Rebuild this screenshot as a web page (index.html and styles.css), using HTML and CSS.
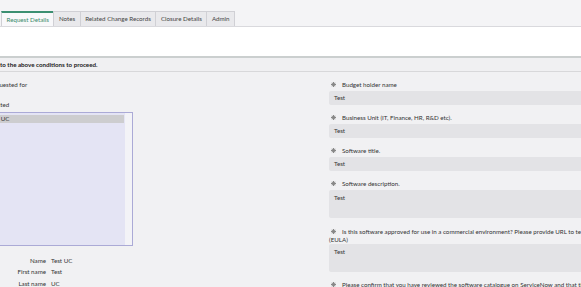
FILE: index.html
```html
<!DOCTYPE html>
<html lang="en">
<head>
    <meta charset="UTF-8">
    <meta name="viewport" content="width=device-width, initial-scale=1.0">
    <title>Software Request</title>
    <link rel="stylesheet" href="styles.css">
</head>
<body>
    <div class="tabbar">
        <div class="tab active">Request Details</div>
        <div class="tab">Notes</div>
        <div class="tab">Related Change Records</div>
        <div class="tab">Closure Details</div>
        <div class="tab">Admin</div>
    </div>
    <div class="banner"></div>
    <div class="notice">to the above conditions to proceed.</div>

    <div class="form">
        <!-- Requested for -->
        <div class="col-left">
            <div class="lbl lbl-req">Requested for</div>
            <div class="lbl lbl-sel">Selected</div>
            <div class="listbox">
                <div class="options">
                    <div class="option selected">Test UC</div>
                </div>
                <div class="scroll-track"></div>
            </div>
            <div class="details">
                <span class="dt">Name</span><span class="dd">Test UC</span>
                <span class="dt">First name</span><span class="dd">Test</span>
                <span class="dt">Last name</span><span class="dd">UC</span>
            </div>
        </div>

        <!-- Variables -->
        <div class="col-right">
            <div class="field">
                <div class="label"><span class="req"></span>Budget holder name</div>
                <div class="input">Test</div>
            </div>
            <div class="field">
                <div class="label"><span class="req"></span>Business Unit (IT, Finance, HR, R&amp;D etc).</div>
                <div class="input">Test</div>
            </div>
            <div class="field">
                <div class="label"><span class="req"></span>Software title.</div>
                <div class="input">Test</div>
            </div>
            <div class="field">
                <div class="label"><span class="req"></span>Software description.</div>
                <div class="input textarea">Test</div>
            </div>
            <div class="field">
                <div class="label label-wrap"><span class="req"></span>Is this software approved for use in a commercial environment? Please provide URL to terms and conditions<br>(EULA)</div>
                <div class="input textarea">Test</div>
            </div>
            <div class="field">
                <div class="label"><span class="req"></span>Please confirm that you have reviewed the software catalogue on ServiceNow and that this software is not already available.</div>
            </div>
        </div>
    </div>
</body>
</html>
```

FILE: styles.css
```css
body {
    margin: 0;
    width: 581px;
    height: 287px;
    overflow: hidden;
    background-color: #f1f1f3;
    color: #333;
    font-family: Lato, "Open Sans", sans-serif;
    font-size: 6.2px;
}
/* Tabs */
.tabbar {
    height: 26px;
    background: #f4f4f6;
    border-bottom: 1px solid #d9d9dd;
    display: flex;
    align-items: flex-end;
    padding-left: 1px;
}
.tab {
    height: 15px;
    box-sizing: border-box;
    line-height: 14px;
    padding: 0 4.5px;
    border: 1px solid #d0d0d5;
    border-bottom: none;
    margin-right: -1px;
    background: #e9e9ec;
    color: #444;
}
.tab.active {
    border-top: 2px solid #3b8f71;
    line-height: 13px;
    background: #f8f8fa;
    color: #3a8a6b;
}
.banner {
    height: 29px;
    background: #fff;
    border-bottom: 2px solid #cbcfcf;
}
.notice {
    height: 13px;
    line-height: 13px;
    background: #f0f0f2;
    border-bottom: 1px solid #d8d8da;
    font-weight: bold;
    color: #222;
}
/* Form */
.form {
    display: grid;
    grid-template-columns: 344px 420px;
    margin-left: -15px;
    padding-top: 8px;
}
.lbl {
    line-height: 9px;
}
.lbl-req {
    padding-left: 4px;
}
.lbl-sel {
    margin-top: 11px;
    padding-left: 1px;
}
.listbox {
    display: flex;
    width: 148px;
    height: 134px;
    box-sizing: border-box;
    margin-top: 3px;
    border: 1px solid #abaad6;
    background: #e4e4f4;
}
.options {
    flex: 1;
    padding: 2px 1px 0 0;
}
.option {
    height: 8px;
    line-height: 8px;
    padding-left: 2px;
}
.option.selected {
    background: #cdcdcf;
}
.scroll-track {
    width: 7px;
    background: #f3f3f7;
}
.details {
    display: grid;
    grid-template-columns: 61px auto;
    column-gap: 5px;
    margin-top: 9px;
    line-height: 11.3px;
}
.dt {
    text-align: right;
}
.field {
    margin-bottom: 8px;
}
.label {
    line-height: 8px;
    padding-top: 1px;
    text-indent: 2px;
}
.label-wrap {
    padding-top: 2px;
    margin-bottom: -2px;
}
.req {
    display: inline-block;
    width: 5px;
    height: 5px;
    margin-right: 6px;
    vertical-align: 0;
    background:
        linear-gradient(#888, #888) center / 1px 5px no-repeat,
        linear-gradient(#888, #888) center / 5px 1px no-repeat;
    position: relative;
}
.req::after {
    content: "";
    position: absolute;
    inset: 0;
    background:
        linear-gradient(#888, #888) center / 1px 5px no-repeat,
        linear-gradient(#888, #888) center / 5px 1px no-repeat;
    transform: rotate(45deg);
}
.input {
    margin-top: 2px;
    height: 14px;
    line-height: 14px;
    padding-left: 5px;
    background: #e3e3e6;
    border-radius: 2px;
    color: #333;
}
.input.textarea {
    height: 28px;
    line-height: 9px;
    padding-top: 3px;
    box-sizing: border-box;
}
```
